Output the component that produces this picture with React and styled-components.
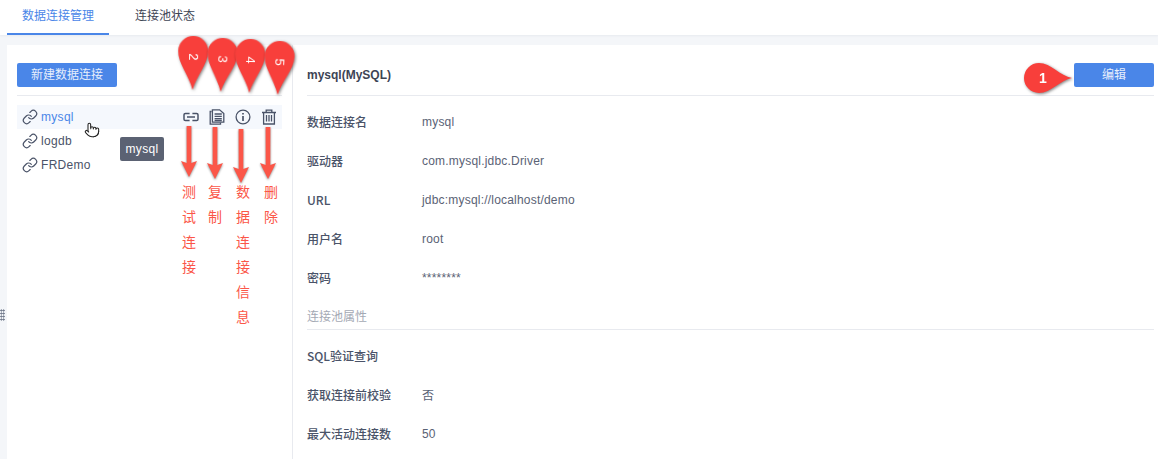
import React from "react";
import styled, { createGlobalStyle } from "styled-components";
import { Link, Pointer } from "lucide-react";

const FONT = `"Liberation Sans", "Noto Sans CJK SC", sans-serif`;

const GlobalStyle = createGlobalStyle`
	html, body {
		margin: 0;
		padding: 0;
		background: #f4f6f9;
		overflow: hidden;
	}
	body {
		font-family: ${FONT};
		color: #4a5368;
	}
`;

const connections = ["mysql", "logdb", "FRDemo"];

const baseFields = [
	{ label: "数据连接名", value: "mysql" },
	{ label: "驱动器", value: "com.mysql.jdbc.Driver" },
	{ label: "URL", value: "jdbc:mysql://localhost/demo" },
	{ label: "用户名", value: "root" },
	{ label: "密码", value: "********" },
];

const poolFields = [
	{ label: "SQL验证查询", value: "" },
	{ label: "获取连接前校验", value: "否" },
	{ label: "最大活动连接数", value: "50" },
];

const pins = [
	{ n: 2, x: 178, y: 36, angle: 1 },
	{ n: 3, x: 207, y: 38, angle: 3 },
	{ n: 4, x: 235, y: 39, angle: 1.5 },
	{ n: 5, x: 264, y: 41, angle: 3 },
];

const arrows = [
	{ x: 178.5, y: 126, h: 51 },
	{ x: 204.5, y: 127, h: 52 },
	{ x: 231, y: 129, h: 54 },
	{ x: 258, y: 127, h: 52 },
];

const notes = [
	{ x: 182, text: "测试连接" },
	{ x: 208, text: "复制" },
	{ x: 236, text: "数据连接信息" },
	{ x: 264, text: "删除" },
];

const TestIcon = () => (
	<svg width="16" height="16" viewBox="0 0 16 16" fill="none" stroke="currentColor" strokeWidth="1.5">
		<path d="M6.6 4.4H2.4Q1 4.4 1 5.8V10.2Q1 11.6 2.4 11.6H6.6M9.4 4.4H13.6Q15 4.4 15 5.8V10.2Q15 11.6 13.6 11.6H9.4M4 8H12" />
	</svg>
);

const CopyIcon = () => (
	<svg width="16" height="16" viewBox="0 0 16 16" fill="none" stroke="currentColor" strokeWidth="1.3">
		<path d="M2.6 2.5H1.2V15.2H11.5V13.8" />
		<path d="M3.4 .8H10.6L14.8 4.6V13.2H3.4Z" />
		<path d="M5.6 5H12.8M5.6 7.4H12.8M5.6 9.6H12.8M5.6 11.5H12.8" />
	</svg>
);

const InfoIcon = () => (
	<svg width="16" height="16" viewBox="0 0 16 16" fill="none" stroke="currentColor" strokeWidth="1.3">
		<circle cx="8" cy="8" r="6.9" />
		<path d="M8 7V12" strokeWidth="1.7" />
		<path d="M8 3.9V5.6" strokeWidth="1.7" />
	</svg>
);

const TrashIcon = () => (
	<svg width="16" height="16" viewBox="0 0 16 16" fill="none" stroke="currentColor" strokeWidth="1.3">
		<path d="M1 3.5H15M5.2 3.5V1.2H10.8V3.5M2.6 3.5V15H13.4V3.5M5.5 6V12.5M8 6V12.5M10.5 6V12.5" />
	</svg>
);

const Pin = ({ n, x, y, angle }) => (
	<PinBox $x={x} $y={y} $angle={angle}>
		<svg width="30" height="54" viewBox="0 0 30 54">
			<path d="M15 54C11 39 0 28 0 15A15 15 0 0 1 30 15C30 28 19 39 15 54Z" fill="#f83f3b" />
			<text x="15" y="25.5" transform="rotate(90 15 21)" textAnchor="middle" fontSize="13" fill="#fff" fontFamily="Liberation Sans">
				{n}
			</text>
		</svg>
	</PinBox>
);

const Arrow = ({ x, y, h }) => (
	<ArrowBox $x={x} $y={y}>
		<svg width="20" height={h} viewBox={`0 0 20 ${h}`}>
			<path d={`M7.6 0H12.4L12.3 ${h - 14}L18 ${h - 16}L10 ${h}L2 ${h - 16}L7.7 ${h - 14}Z`} fill="#fb5648" />
		</svg>
	</ArrowBox>
);

export default function App() {
	return (
		<Page>
			<GlobalStyle />
			<TabBar>
				<Tab $active>数据连接管理</Tab>
				<Tab>连接池状态</Tab>
			</TabBar>
			<Body>
				<Sidebar>
					<PrimaryButton $width={100}>新建数据连接</PrimaryButton>
					<SideDivider />
					<List>
						{connections.map((name, i) => (
							<ListRow key={name} $active={i === 0}>
								<Link size={16} strokeWidth={1.8} color="#4a5368" />
								<ListName $active={i === 0}>{name}</ListName>
								{i === 0 && (
									<RowActions>
										<TestIcon />
										<CopyIcon />
										<InfoIcon />
										<TrashIcon />
									</RowActions>
								)}
							</ListRow>
						))}
					</List>
				</Sidebar>
				<Detail>
					<DetailHead>
						<DetailTitle>mysql(MySQL)</DetailTitle>
						<PrimaryButton $width={80}>编辑</PrimaryButton>
					</DetailHead>
					<Fields>
						{baseFields.map((f) => (
							<Field key={f.label}>
								<FieldLabel>{f.label}</FieldLabel>
								<FieldValue>{f.value}</FieldValue>
							</Field>
						))}
					</Fields>
					<SectionTitle>连接池属性</SectionTitle>
					<Fields $top={6}>
						{poolFields.map((f) => (
							<Field key={f.label}>
								<FieldLabel>{f.label}</FieldLabel>
								<FieldValue>{f.value}</FieldValue>
							</Field>
						))}
					</Fields>
				</Detail>
			</Body>

			<Grip />
			<Tooltip>mysql</Tooltip>
			<Cursor>
				<Pointer size={16} strokeWidth={1.6} fill="#fff" color="#222" />
			</Cursor>
			{pins.map((p) => (
				<Pin key={p.n} {...p} />
			))}
			{arrows.map((a) => (
				<Arrow key={a.x} {...a} />
			))}
			{notes.map((note) => (
				<Note key={note.x} $x={note.x}>
					{note.text.split("").map((c, i) => (
						<span key={i}>{c}</span>
					))}
				</Note>
			))}
			<SidePin>
				<svg width="48" height="30" viewBox="0 0 48 30">
					<path d="M48 15C36 17 27 30 15 30A15 15 0 0 1 15 0C27 0 36 13 48 15Z" fill="#f83f3b" />
					<text x="19" y="20" textAnchor="middle" fontSize="14" fontWeight="700" fill="#fff" fontFamily="Liberation Sans">
						1
					</text>
				</svg>
			</SidePin>
		</Page>
	);
}

const Page = styled.div`
	position: relative;
	width: 1158px;
	height: 459px;
	overflow: hidden;
`;

const TabBar = styled.div`
	display: flex;
	height: 35px;
	padding-left: 7px;
	background: #fff;
	box-shadow: 0 1px 2px rgba(40, 50, 80, 0.06);
`;

const Tab = styled.div`
	box-sizing: border-box;
	width: ${(p) => (p.$active ? "102px" : "auto")};
	margin-right: ${(p) => (p.$active ? "26px" : "0")};
	height: 35px;
	line-height: 32px;
	text-align: center;
	font-size: 12px;
	color: ${(p) => (p.$active ? "#4a86e8" : "#3d4455")};
	border-bottom: 2px solid ${(p) => (p.$active ? "#4a86e8" : "transparent")};
`;

const Body = styled.div`
	display: flex;
	height: 414px;
	margin: 10px 0 0 7px;
	background: #fff;
`;

const Sidebar = styled.div`
	box-sizing: border-box;
	width: 286px;
	padding: 18px 10px 0;
	border-right: 1px solid #e8eaef;
`;

const PrimaryButton = styled.div`
	width: ${(p) => p.$width}px;
	height: 24px;
	line-height: 25px;
	border-radius: 2px;
	background: #4a86e8;
	color: #e6eefc;
	font-size: 12px;
	text-align: center;
`;

const SideDivider = styled.div`
	height: 1px;
	margin: 8px 0 9px;
	background: #e8eaef;
`;

const List = styled.div`
	display: flex;
	flex-direction: column;
`;

const ListRow = styled.div`
	display: flex;
	align-items: center;
	height: 24px;
	padding-left: 5px;
	background: ${(p) => (p.$active ? "#f5f8fd" : "transparent")};
`;

const ListName = styled.span`
	margin-left: 3px;
	font-size: 12px;
	letter-spacing: 0.3px;
	color: ${(p) => (p.$active ? "#4a86e8" : "#4a5368")};
`;

const RowActions = styled.div`
	display: flex;
	align-items: center;
	gap: 10px;
	margin-left: auto;
	padding-right: 5px;
	color: #4a5368;
`;

const Detail = styled.div`
	flex: 1;
	padding: 18px 4px 0 14px;
`;

const DetailHead = styled.div`
	display: flex;
	align-items: flex-start;
	justify-content: space-between;
	height: 32px;
	border-bottom: 1px solid #e8eaef;
`;

const DetailTitle = styled.div`
	font-size: 12px;
	font-weight: 700;
	line-height: 24px;
	color: #3d4455;
`;

const Fields = styled.div`
	display: flex;
	flex-direction: column;
	padding-top: ${(p) => p.$top ?? 6}px;
`;

const Field = styled.div`
	display: flex;
	align-items: center;
	height: 39px;
	font-size: 12px;
`;

const FieldLabel = styled.div`
	width: 115px;
	font-family: "Noto Sans CJK SC", "Liberation Sans", sans-serif;
	font-weight: 500;
	color: #4a5368;
`;

const FieldValue = styled.div`
	letter-spacing: 0.2px;
	color: #5a6275;
`;

const SectionTitle = styled.div`
	box-sizing: border-box;
	height: 33px;
	padding-top: 14px;
	line-height: 13px;
	font-size: 12px;
	color: #a4a9b4;
	border-bottom: 1px solid #e8eaef;
`;

const Grip = styled.div`
	position: absolute;
	left: 0;
	top: 309px;
	width: 5px;
	height: 12px;
	background-image: radial-gradient(#6b7385 45%, transparent 55%);
	background-size: 2.5px 3px;
`;

const Tooltip = styled.div`
	position: absolute;
	left: 120px;
	top: 137px;
	width: 44px;
	height: 24px;
	line-height: 24px;
	border-radius: 2px;
	background: #5b6273;
	color: #fff;
	font-size: 12px;
	letter-spacing: 0.3px;
	text-align: center;
`;

const Cursor = styled.div`
	position: absolute;
	left: 84px;
	top: 122px;
`;

const PinBox = styled.div`
	position: absolute;
	left: ${(p) => p.$x}px;
	top: ${(p) => p.$y}px;
	transform: rotate(${(p) => p.$angle}deg);
	filter: drop-shadow(1px 1px 1.5px rgba(0, 0, 0, 0.5));
	svg {
		display: block;
	}
`;

const ArrowBox = styled.div`
	position: absolute;
	left: ${(p) => p.$x}px;
	top: ${(p) => p.$y}px;
	filter: drop-shadow(0 1px 1px rgba(0, 0, 0, 0.45));
	svg {
		display: block;
	}
`;

const Note = styled.div`
	position: absolute;
	left: ${(p) => p.$x}px;
	top: 180px;
	display: flex;
	flex-direction: column;
	font-size: 14px;
	line-height: 25px;
	color: #fb5648;
`;

const SidePin = styled.div`
	position: absolute;
	left: 1024px;
	top: 63px;
	filter: drop-shadow(1px 1px 1.5px rgba(0, 0, 0, 0.5));
	svg {
		display: block;
	}
`;
